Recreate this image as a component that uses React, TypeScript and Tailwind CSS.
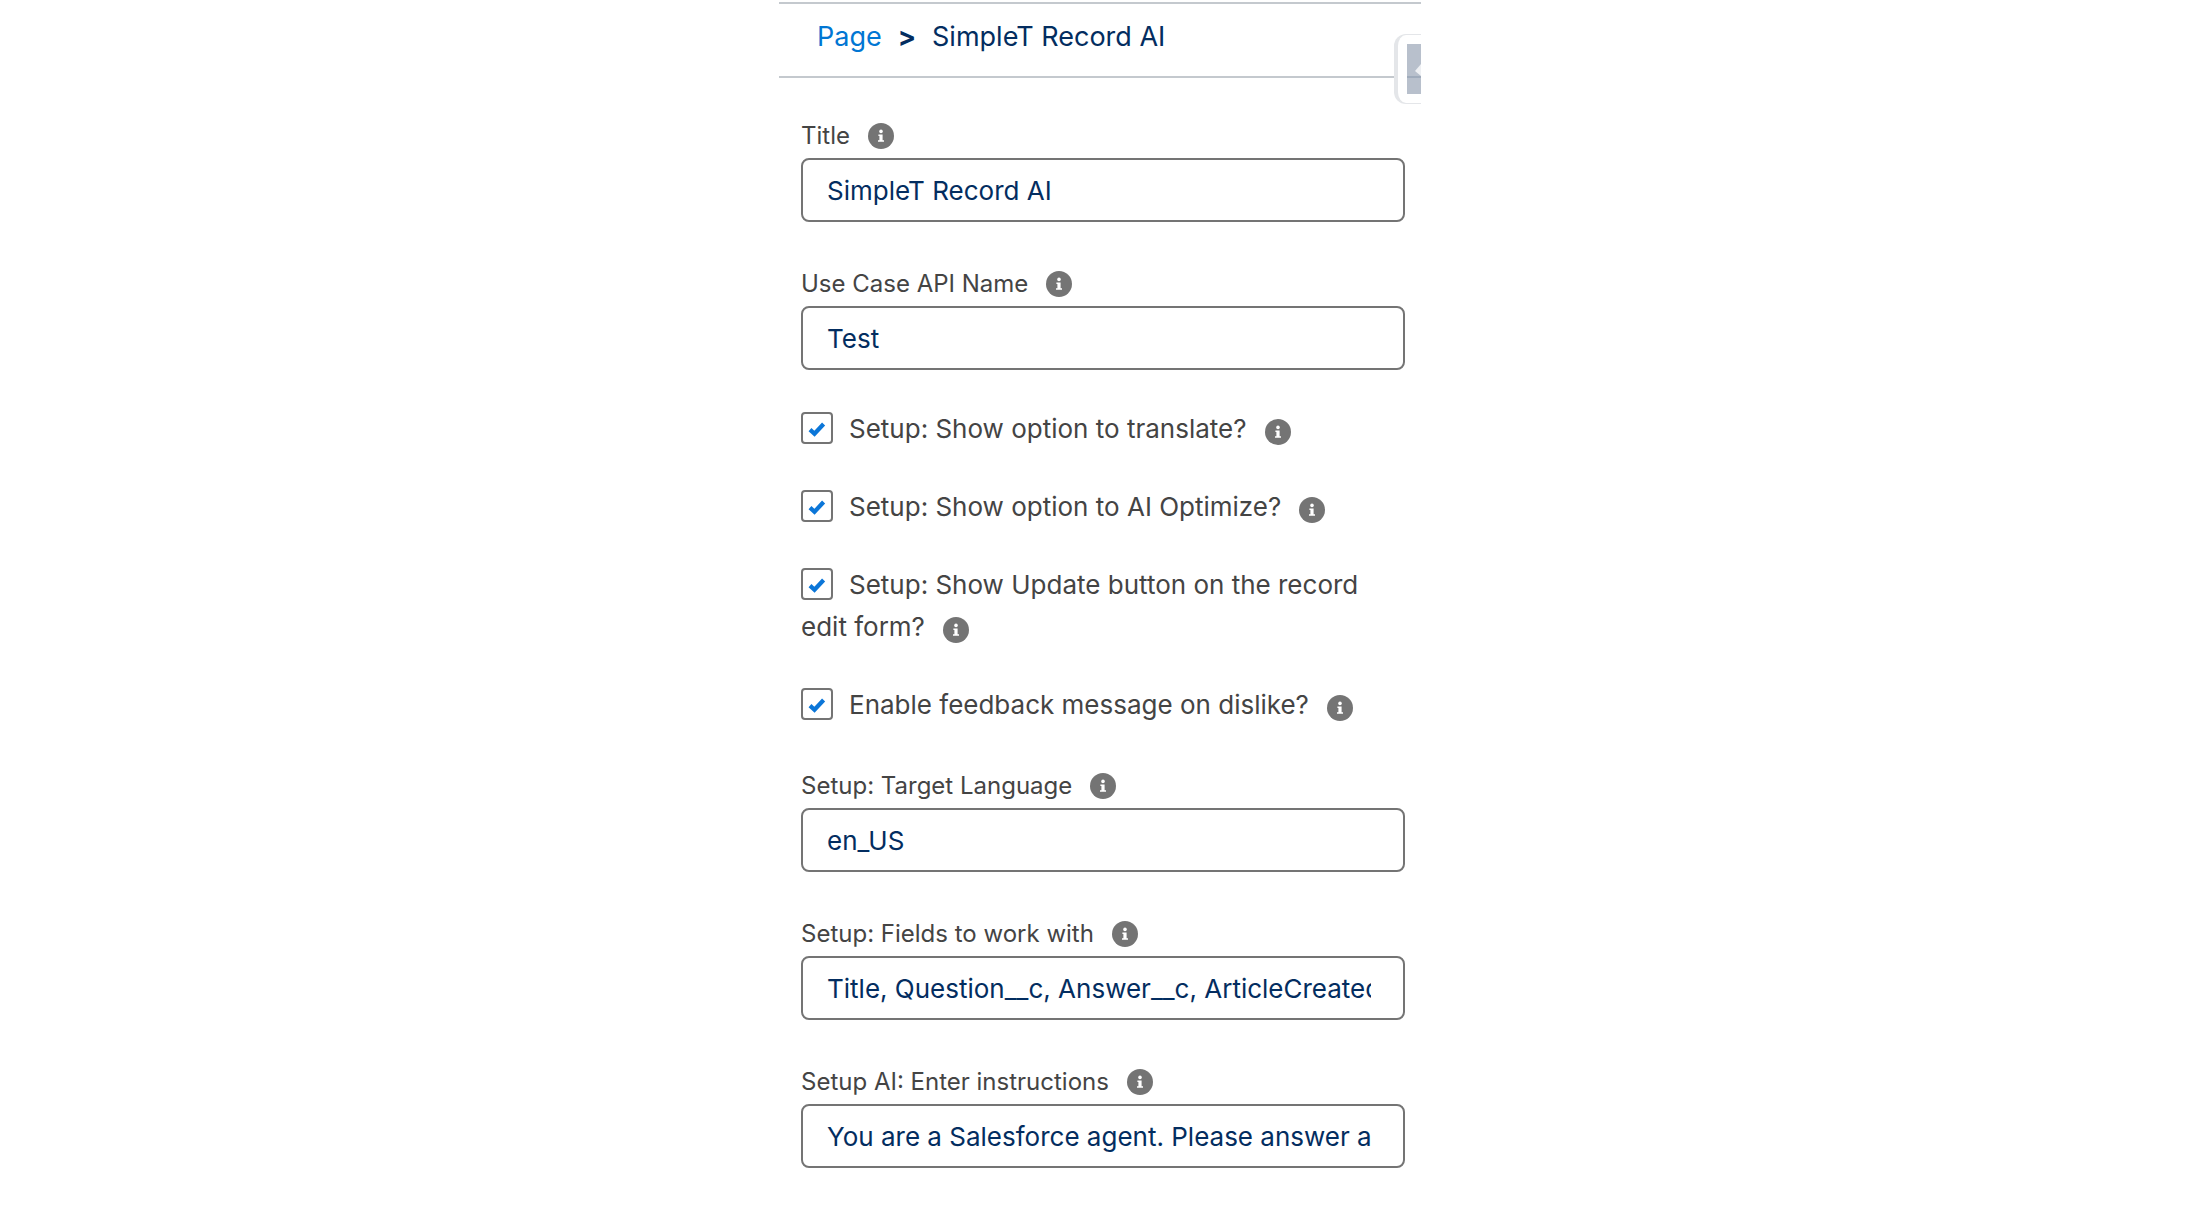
import React, { useState } from 'react';

interface TextFieldProps {
  id: string;
  label: string;
  initialValue: string;
}

interface CheckboxFieldProps {
  id: string;
  label: string;
}

function InfoButton({ label, className = '' }: { label: string; className?: string }) {
  return (
    <button type="button" aria-label={`Help: ${label}`} className={`ml-[18px] h-[26px] w-[26px] shrink-0 ${className}`}>
      <svg viewBox="0 0 26 26" className="h-full w-full">
        <circle cx="13" cy="13" r="13" fill="#747474" />
        <circle cx="13" cy="8.4" r="1.8" fill="#fff" />
        <path d="M10.4 11.4h4.2v5.8h1.4v1.6h-6v-1.6h1.4v-4.2h-1z" fill="#fff" />
      </svg>
    </button>
  );
}

function TextField({ id, label, initialValue }: TextFieldProps) {
  const [value, setValue] = useState(initialValue);

  return (
    <div>
      <div className="mb-1 flex items-center">
        <label htmlFor={id} className="text-[24px] leading-9 text-[#444]">
          {label}
        </label>
        <InfoButton label={label} />
      </div>
      <input
        id={id}
        type="text"
        value={value}
        onChange={(e) => setValue(e.target.value)}
        className="block h-16 w-full rounded-lg border-2 border-[#747474] bg-white pr-8 pl-6 text-[26px] text-[#032d60] outline-none focus:border-[#0176d3]"
      />
    </div>
  );
}

function CheckboxField({ id, label }: CheckboxFieldProps) {
  const [checked, setChecked] = useState(true);

  return (
    <div className="text-[26px] leading-[42px] text-[#444]">
      <span className="relative mr-4 inline-block h-8 w-8 align-[-6px]">
        <input
          id={id}
          type="checkbox"
          checked={checked}
          onChange={(e) => setChecked(e.target.checked)}
          className="block h-8 w-8 appearance-none rounded border-2 border-[#747474] bg-white"
        />
        {checked && (
          <svg viewBox="0 0 32 32" className="pointer-events-none absolute inset-0 h-8 w-8">
            <path d="M9 17.6l4.5 4.2L22.6 12" fill="none" stroke="#0b76d8" strokeWidth="4.2" />
          </svg>
        )}
      </span>
      <label htmlFor={id}>{label}</label>
      <InfoButton label={label} className="inline-block align-[-7px]" />
    </div>
  );
}

export default function App() {
  return (
    <main className="relative mx-auto max-w-[642px] overflow-hidden bg-white pt-0.5 font-['Inter','Liberation_Sans',sans-serif]">
      <nav
        aria-label="Breadcrumb"
        className="flex gap-4 border-y-2 border-[#c4c9ce] pt-3 pr-4 pb-[18px] pl-[38px] text-[27px] leading-[42px] text-[#032d60]"
      >
        <a href="#page" className="text-[#0176d3]">
          Page
        </a>
        <span className="font-bold">&gt;</span>
        <span>SimpleT Record AI</span>
      </nav>

      {/* Collapse handle, cut off by the panel edge */}
      <button
        type="button"
        aria-label="Collapse panel"
        className="absolute top-[34px] right-0 flex h-[70px] w-[27px] items-center justify-end rounded-l-xl border-y border-l-4 border-[#e4e6e9] bg-white"
      >
        <svg viewBox="0 0 14 50" className="h-[50px] w-3.5">
          <path d="M0 0h14v50H0z" fill="#b8c0cc" />
          <path d="M14 20l-6 7 6 5z" fill="#eef0f3" />
          <path d="M0 32h14v2H0z" fill="#9fabbb" />
        </svg>
      </button>

      <form className="pt-10 pr-4 pl-[22px]" onSubmit={(e) => e.preventDefault()}>
        <div className="space-y-11">
          <TextField id="title" label="Title" initialValue="SimpleT Record AI" />
          <TextField id="use-case" label="Use Case API Name" initialValue="Test" />
        </div>

        <div className="mt-[38px] mb-[42px] space-y-9">
          <CheckboxField id="show-translate" label="Setup: Show option to translate?" />
          <CheckboxField id="show-optimize" label="Setup: Show option to AI Optimize?" />
          <CheckboxField id="show-update" label="Setup: Show Update button on the record edit form?" />
          <CheckboxField id="enable-feedback" label="Enable feedback message on dislike?" />
        </div>

        <div className="space-y-11">
          <TextField id="language" label="Setup: Target Language" initialValue="en_US" />
          <TextField
            id="fields"
            label="Setup: Fields to work with"
            initialValue="Title, Question__c, Answer__c, ArticleCreatedDate"
          />
          <TextField
            id="instructions"
            label="Setup AI: Enter instructions"
            initialValue="You are a Salesforce agent. Please answer according to the record"
          />
        </div>
      </form>
    </main>
  );
}
